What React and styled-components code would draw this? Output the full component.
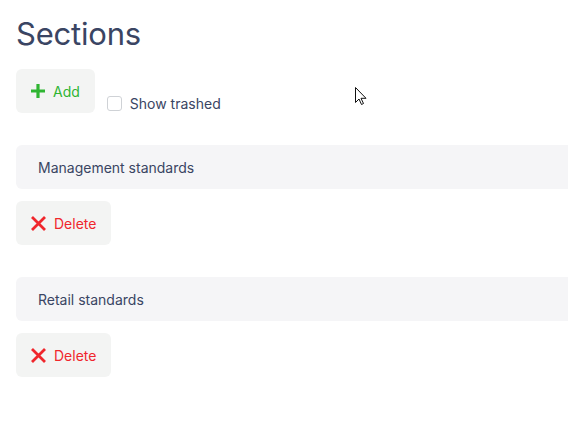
import { useState } from "react";
import styled, { createGlobalStyle } from "styled-components";

const GlobalStyle = createGlobalStyle`
  html, body {
    margin: 0;
    padding: 0;
    background: #ffffff;
    overflow: hidden;
  }
  body {
    font-family: Inter, "Noto Sans", sans-serif;
    color: #3a4563;
  }
`;

const Page = styled.div`
  position: relative;
  width: 620px;
  padding: 14px 0 0 16px;
  box-sizing: border-box;
`;

const Title = styled.h1`
  margin: 0;
  font-size: 31px;
  font-weight: 400;
  line-height: 40px;
  color: #3a4563;
  letter-spacing: -0.2px;
`;

const Toolbar = styled.div`
  display: flex;
  align-items: flex-end;
  gap: 12px;
  margin-top: 15px;
`;

const Button = styled.button`
  display: inline-flex;
  align-items: center;
  gap: 7px;
  height: 44px;
  padding: 0 ${(p) => p.$padRight || 14}px 0 14px;
  border: none;
  border-radius: 6px;
  background: ${(p) => p.$bg || "#f3f4f3"};
  color: ${(p) => p.$color};
  font-family: inherit;
  font-size: 14px;
  cursor: pointer;
`;

const CheckLabel = styled.label`
  display: flex;
  align-items: center;
  gap: 8px;
  font-size: 14px;
  color: #3a4563;
  margin-bottom: 1px;
`;

const Box = styled.span`
  width: 15px;
  height: 15px;
  box-sizing: border-box;
  border: 1px solid #cfd2d6;
  border-radius: 3px;
  background: #fff;
`;

const List = styled.div`
  display: flex;
  flex-direction: column;
  margin-top: 32px;
`;

const Item = styled.div`
  display: flex;
  flex-direction: column;
  align-items: flex-start;
  gap: 12px;
  margin-bottom: 32px;
`;

const Row = styled.div`
  align-self: stretch;
  display: flex;
  align-items: center;
  height: 44px;
  padding-left: 22px;
  border-radius: 6px;
  background: #f5f5f7;
  font-size: 14px;
  color: #3a4563;
`;

const Cursor = styled.svg`
  position: absolute;
  left: 355px;
  top: 87px;
`;

function PlusIcon() {
  return (
    <svg width="16" height="16" viewBox="0 0 16 16">
      <path d="M8 1v14M1 8h14" stroke="#2fb532" strokeWidth="3.2" />
    </svg>
  );
}

function CrossIcon() {
  return (
    <svg width="17" height="17" viewBox="0 0 17 17">
      <path d="M2 2l13 13M15 2L2 15" stroke="#f0262c" strokeWidth="2.8" />
    </svg>
  );
}

const sections = [
  { id: 1, name: "Management standards" },
  { id: 2, name: "Retail standards" },
];

export default function App() {
  const [items, setItems] = useState(sections);

  return (
    <Page>
      <GlobalStyle />
      <Title>Sections</Title>
      <Toolbar>
        <Button $color="#2fb532" $padRight={15}>
          <PlusIcon />
          Add
        </Button>
        <CheckLabel>
          <Box />
          Show trashed
        </CheckLabel>
      </Toolbar>
      <List>
        {items.map((s) => (
          <Item key={s.id}>
            <Row>{s.name}</Row>
            <Button
              $color="#f0262c"
              $padRight={15}
              onClick={() => setItems(items.filter((i) => i.id !== s.id))}
            >
              <CrossIcon />
              Delete
            </Button>
          </Item>
        ))}
      </List>
      <Cursor width="12" height="20" viewBox="0 0 12 20">
        <path
          d="M0.5 0.5v15l3.5-3.5 2.5 5.5 2-1-2.5-5.2h5z"
          fill="#fff"
          stroke="#111"
          strokeWidth="1"
          strokeLinejoin="round"
        />
      </Cursor>
    </Page>
  );
}
